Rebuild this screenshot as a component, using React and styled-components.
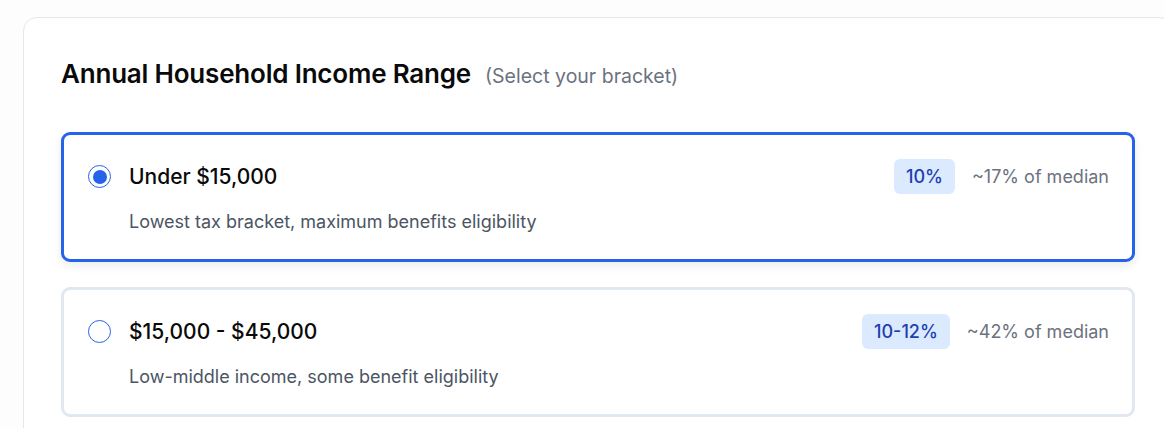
import React from 'react';
import styled, { createGlobalStyle, css } from 'styled-components';

const GlobalStyle = createGlobalStyle`
  html, body {
    margin: 0;
    padding: 0;
    background: #fdfdfd;
    overflow: hidden;
  }
  body {
    font-family: Inter, "Noto Sans", sans-serif;
    color: #111827;
  }
`;

const brackets = [
  {
    id: 'under15',
    label: 'Under $15,000',
    description: 'Lowest tax bracket, maximum benefits eligibility',
    rate: '10%',
    median: '~17% of median',
  },
  {
    id: '15to45',
    label: '$15,000 - $45,000',
    description: 'Low-middle income, some benefit eligibility',
    rate: '10-12%',
    median: '~42% of median',
  },
];

const StyledPage = styled.div`
  padding: 17px 0 0 23px;
`;

const StyledCard = styled.section`
  width: 1150px;
  box-sizing: border-box;
  background: #ffffff;
  border: 1px solid #e5e7eb;
  border-radius: 14px;
  padding: 39px 37px;
`;

const StyledHeader = styled.div`
  display: flex;
  align-items: baseline;
  gap: 14px;
  margin-bottom: 41px;
`;

const StyledTitle = styled.h2`
  margin: 0;
  font-size: 26px;
  line-height: 34px;
  font-weight: 600;
  color: #0a0a0a;
  letter-spacing: -0.2px;
`;

const StyledHint = styled.span`
  font-size: 19.5px;
  color: #6b7280;
`;

const StyledList = styled.div`
  display: flex;
  flex-direction: column;
  gap: 25px;
`;

const StyledOption = styled.label`
  display: block;
  background: #ffffff;
  border: 3px solid #e2e8f0;
  border-radius: 9px;
  padding: 24px 23px 24px 24px;
  cursor: pointer;

  ${props => props.selected && css`
    border-color: #2563eb;
    box-shadow: 0 4px 10px rgba(15, 23, 42, 0.08);
  `}
`;

const StyledRow = styled.div`
  display: flex;
  align-items: center;
  height: 35px;
`;

const StyledRadio = styled.span`
  flex: 0 0 auto;
  box-sizing: border-box;
  width: 23px;
  height: 23px;
  border-radius: 50%;
  border: 1.5px solid #2563eb;
  display: flex;
  align-items: center;
  justify-content: center;
  margin-right: 18px;

  &::after {
    content: '';
    width: 14px;
    height: 14px;
    border-radius: 50%;
    background: ${props => (props.checked ? '#2563eb' : 'transparent')};
  }
`;

const StyledLabel = styled.span`
  flex: 1;
  font-size: 21px;
  font-weight: 450;
  color: #0a0a0a;
`;

const StyledBadge = styled.span`
  background: #dbeafe;
  color: #1e40af;
  font-size: 18px;
  font-weight: 500;
  line-height: 35px;
  padding: 0 12px;
  border-radius: 6px;
  margin-right: 17px;
`;

const StyledMedian = styled.span`
  font-size: 18px;
  color: #6b7280;
`;

const StyledDescription = styled.p`
  margin: 14px 0 0 41px;
  font-size: 18px;
  line-height: 27px;
  color: #4b5563;
`;

const App = () => {
  return (
    <StyledPage>
      <GlobalStyle />
      <StyledCard>
        <StyledHeader>
          <StyledTitle>Annual Household Income Range</StyledTitle>
          <StyledHint>(Select your bracket)</StyledHint>
        </StyledHeader>
        <StyledList>
          {brackets.map(({ id, label, description, rate, median }, index) => (
            <StyledOption key={id} selected={index === 0}>
              <StyledRow>
                <StyledRadio checked={index === 0} />
                <StyledLabel>{label}</StyledLabel>
                <StyledBadge>{rate}</StyledBadge>
                <StyledMedian>{median}</StyledMedian>
              </StyledRow>
              <StyledDescription>{description}</StyledDescription>
            </StyledOption>
          ))}
        </StyledList>
      </StyledCard>
    </StyledPage>
  );
};

export default App;
